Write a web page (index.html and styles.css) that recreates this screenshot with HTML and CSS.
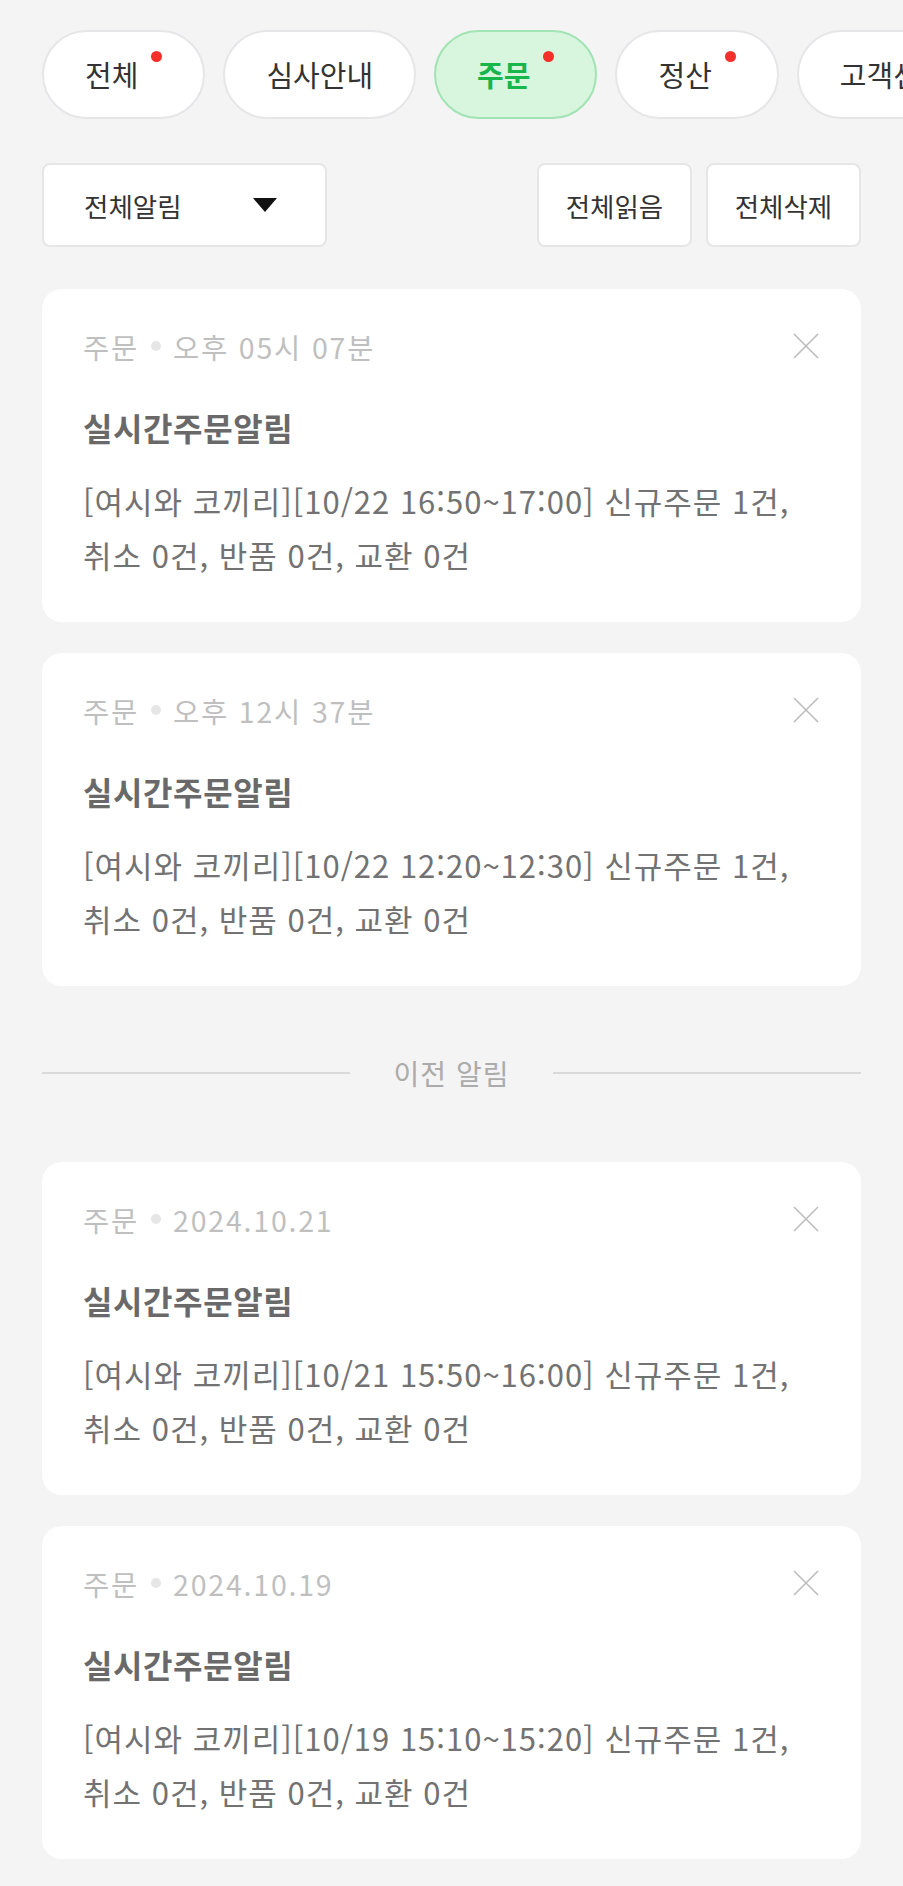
FILE: index.html
```html
<!DOCTYPE html>
<html lang="ko">
<head>
<meta charset="utf-8">
<title>알림</title>
<link rel="stylesheet" href="styles.css">
</head>
<body>
<div class="page">
  <nav class="chips">
    <button class="chip">전체<span class="dot"></span></button>
    <button class="chip">심사안내</button>
    <button class="chip chip-active">주문<span class="dot"></span></button>
    <button class="chip">정산<span class="dot"></span></button>
    <button class="chip">고객센터</button>
  </nav>

  <div class="toolbar">
    <div class="select">
      <span>전체알림</span>
      <span class="caret"></span>
    </div>
    <div class="actions">
      <button class="btn">전체읽음</button>
      <button class="btn">전체삭제</button>
    </div>
  </div>

  <div class="list">
    <article class="card">
      <div class="meta">
        <span>주문</span><span class="sep"></span><span>오후 05시 07분</span>
        <svg class="close" width="26" height="26" viewBox="0 0 26 26"><path d="M1 1L25 25M25 1L1 25" stroke="#bdbdbd" stroke-width="1.6" fill="none"/></svg>
      </div>
      <h3 class="title">실시간주문알림</h3>
      <p class="body">[여시와 코끼리][10/22 16:50~17:00] 신규주문 1건, 취소 0건, 반품 0건, 교환 0건</p>
    </article>

    <article class="card">
      <div class="meta">
        <span>주문</span><span class="sep"></span><span>오후 12시 37분</span>
        <svg class="close" width="26" height="26" viewBox="0 0 26 26"><path d="M1 1L25 25M25 1L1 25" stroke="#bdbdbd" stroke-width="1.6" fill="none"/></svg>
      </div>
      <h3 class="title">실시간주문알림</h3>
      <p class="body">[여시와 코끼리][10/22 12:20~12:30] 신규주문 1건, 취소 0건, 반품 0건, 교환 0건</p>
    </article>
  </div>

  <div class="divider"><span>이전 알림</span></div>

  <div class="list">
    <article class="card">
      <div class="meta">
        <span>주문</span><span class="sep"></span><span>2024.10.21</span>
        <svg class="close" width="26" height="26" viewBox="0 0 26 26"><path d="M1 1L25 25M25 1L1 25" stroke="#bdbdbd" stroke-width="1.6" fill="none"/></svg>
      </div>
      <h3 class="title">실시간주문알림</h3>
      <p class="body">[여시와 코끼리][10/21 15:50~16:00] 신규주문 1건, 취소 0건, 반품 0건, 교환 0건</p>
    </article>

    <article class="card">
      <div class="meta">
        <span>주문</span><span class="sep"></span><span>2024.10.19</span>
        <svg class="close" width="26" height="26" viewBox="0 0 26 26"><path d="M1 1L25 25M25 1L1 25" stroke="#bdbdbd" stroke-width="1.6" fill="none"/></svg>
      </div>
      <h3 class="title">실시간주문알림</h3>
      <p class="body">[여시와 코끼리][10/19 15:10~15:20] 신규주문 1건, 취소 0건, 반품 0건, 교환 0건</p>
    </article>
  </div>
</div>
</body>
</html>
```

FILE: styles.css
```css
* { box-sizing: border-box; }

html, body {
  margin: 0;
  padding: 0;
  background: #f4f4f4;
}

body {
  font-family: "Noto Sans CJK KR", "Noto Sans", sans-serif;
  color: #333;
}

.page {
  padding: 30px 42px 27px;
  overflow: hidden;
}

/* chips */
.chips {
  display: flex;
  gap: 18px;
  margin-right: -42px;
  overflow: hidden;
}

.chip {
  flex: none;
  display: flex;
  align-items: center;
  height: 89px;
  padding: 0 41px 0 41px;
  border: 2px solid #e6e6e9;
  border-radius: 45px;
  background: #fff;
  font-family: inherit;
  font-size: 29px;
  color: #333;
  line-height: 1;
}

.chip-active {
  background: #d8f5de;
  border-color: #a2e3b3;
  color: #17b64b;
  font-weight: 700;
}

.dot {
  align-self: flex-start;
  width: 11px;
  height: 11px;
  margin: 19px 0 0 13px;
  border-radius: 50%;
  background: #f5302a;
}

/* toolbar */
.toolbar {
  display: flex;
  justify-content: space-between;
  margin-top: 44px;
}

.select {
  display: flex;
  align-items: center;
  justify-content: space-between;
  width: 285px;
  height: 84px;
  padding: 0 48px 0 40px;
  border: 2px solid #e6e6e6;
  border-radius: 8px;
  background: #fff;
  font-size: 26.5px;
  color: #333;
}

.caret {
  width: 0;
  height: 0;
  border-left: 12.5px solid transparent;
  border-right: 12.5px solid transparent;
  border-top: 14px solid #111;
}

.actions {
  display: flex;
  gap: 14px;
}

.btn {
  width: 155px;
  height: 84px;
  padding: 0;
  border: 2px solid #e6e6e6;
  border-radius: 8px;
  background: #fff;
  font-family: inherit;
  font-size: 26.5px;
  color: #333;
}

/* cards */
.list {
  display: flex;
  flex-direction: column;
  gap: 31px;
  margin-top: 42px;
}

.card {
  background: #fff;
  border-radius: 20px;
  padding: 37px 42px 40px 41px;
}

.meta {
  display: flex;
  align-items: center;
  height: 40px;
  font-size: 28.5px;
  letter-spacing: 1.8px;
  color: #bfbfbf;
}

.sep {
  width: 10px;
  height: 10px;
  margin: 0 12px 0 12px;
  border-radius: 50%;
  background: #e6e6e6;
}

.close {
  margin-left: auto;
}

.title {
  margin: 39px 0 0;
  font-size: 32px;
  letter-spacing: 0.6px;
  line-height: 44px;
  font-weight: 700;
  color: #696969;
}

.body {
  margin: 25px 0 0;
  font-size: 31px;
  letter-spacing: 1px;
  line-height: 54px;
  color: #727272;
}

/* divider */
.divider {
  display: flex;
  align-items: center;
  margin: 73px 0 0;
  height: 28px;
  font-size: 28px;
  letter-spacing: 1px;
  color: #ababab;
}

.divider::before,
.divider::after {
  content: "";
  flex: 1;
  height: 2px;
  background: #dadada;
}

.divider span {
  margin: 0 44px;
  line-height: 28px;
}

.divider + .list {
  margin-top: 75px;
}
```
